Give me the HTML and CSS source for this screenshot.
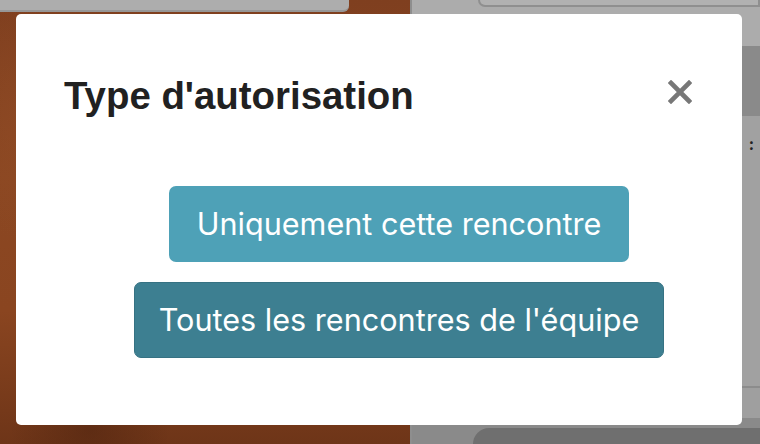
FILE: index.html
```html
<!DOCTYPE html>
<html lang="fr">
<head>
  <meta charset="UTF-8" />
  <meta name="viewport" content="width=device-width, initial-scale=1.0"/>
  <title>Type d'autorisation</title>
  <link rel="stylesheet" href="styles.css">
</head>
<body>
  <div class="scene">
    <div class="wood">
      <div class="wood-bar"></div>
    </div>
    <div class="side">
      <div class="side-head"><div class="side-pill"></div></div>
      <div class="side-band"></div>
      <div class="side-body"><span class="side-colon">:</span></div>
      <div class="side-foot"></div>
      <div class="side-bottom"><div class="side-tab"></div></div>
    </div>
  </div>

  <div class="modal">
    <div class="modal-header">
      <h2 class="modal-title">Type d'autorisation</h2>
      <button type="button" class="close-btn" aria-label="Fermer">
        <svg width="24" height="24" viewBox="0 0 24 24">
          <path d="M3 3 L21 21 M21 3 L3 21" stroke="#777" stroke-width="4.6" stroke-linecap="square" fill="none"/>
        </svg>
      </button>
    </div>
    <div class="modal-body">
      <button type="button" class="btn btn-light">Uniquement cette rencontre</button>
      <button type="button" class="btn btn-dark">Toutes les rencontres de l'équipe</button>
    </div>
  </div>
</body>
</html>
```

FILE: styles.css
```css
/* Base reset */
* { box-sizing: border-box; margin: 0; padding: 0; }
body {
  font-family: Inter, 'Noto Sans', sans-serif;
  width: 760px;
  height: 444px;
  overflow: hidden;
  position: relative;
}
/* Dimmed page behind the modal */
.scene { display: flex; height: 444px; }
.wood {
  width: 410px;
  background:
    radial-gradient(ellipse 60px 120px at 20px 120px, rgba(150,80,40,0.35), transparent),
    radial-gradient(ellipse 80px 60px at 90px 430px, rgba(60,25,10,0.35), transparent),
    linear-gradient(180deg, #7f3f1f 0%, #8b4722 40%, #8a4520 70%, #6e3518 100%);
}
.wood-bar {
  width: 349px; height: 12px;
  background: #adadad;
  border-bottom: 2px solid #979797;
  border-bottom-right-radius: 6px;
}
.side { flex: 1; display: flex; flex-direction: column; background: #a3a3a3; border-left: 2px solid #8e8e8e; }
.side-head { height: 46px; background: #acacac; }
.side-pill {
  margin-left: 66px; height: 7px;
  border: 2px solid #8f8f8f; border-top: none;
  border-bottom-left-radius: 10px;
  background: #b1b1b1;
}
.side-band { height: 70px; background: #8a8a8a; }
.side-body { flex: 1; display: flex; justify-content: flex-end; background: #a1a1a1; }
.side-colon { font-size: 16px; font-weight: 700; color: #222; margin: 20px 6px 0 0; line-height: 16px; }
.side-foot { height: 32px; border-top: 2px solid #8c8c8c; background: #9f9f9f; }
.side-bottom { height: 26px; background: #8a8a8a; padding: 10px 0 0 61px; }
.side-tab { height: 100%; background: #6f6f6f; border-top-left-radius: 22px; }
/* Modal */
.modal {
  position: absolute; left: 16px; top: 14px;
  width: 726px; height: 411px;
  background: #fff;
  border-radius: 5px;
}
.modal-header {
  display: flex; justify-content: space-between; align-items: flex-start;
  padding: 59px 48px 0 48px;
}
.modal-title {
  font-family: 'Liberation Sans', Arial, sans-serif;
  font-size: 38.4px; font-weight: 700; color: #212121;
  line-height: 46px;
}
.close-btn { background: none; border: none; display: flex; cursor: pointer; margin: 7px 2px 0 0; }
.modal-body {
  display: flex; flex-direction: column; align-items: center; gap: 20px;
  padding: 67px 48px 0 88px;
}
.btn {
  font-family: Inter, 'Noto Sans', sans-serif;
  font-size: 30.6px; line-height: 44px; font-weight: 400;
  color: #fff; border: none; border-radius: 7px;
  padding: 16px 28px; cursor: pointer;
}
.btn-light { background: #4ea1b7; }
.btn-dark { background: #3d7f91; border: 1px solid #367283; padding: 15px 24px; }
```
